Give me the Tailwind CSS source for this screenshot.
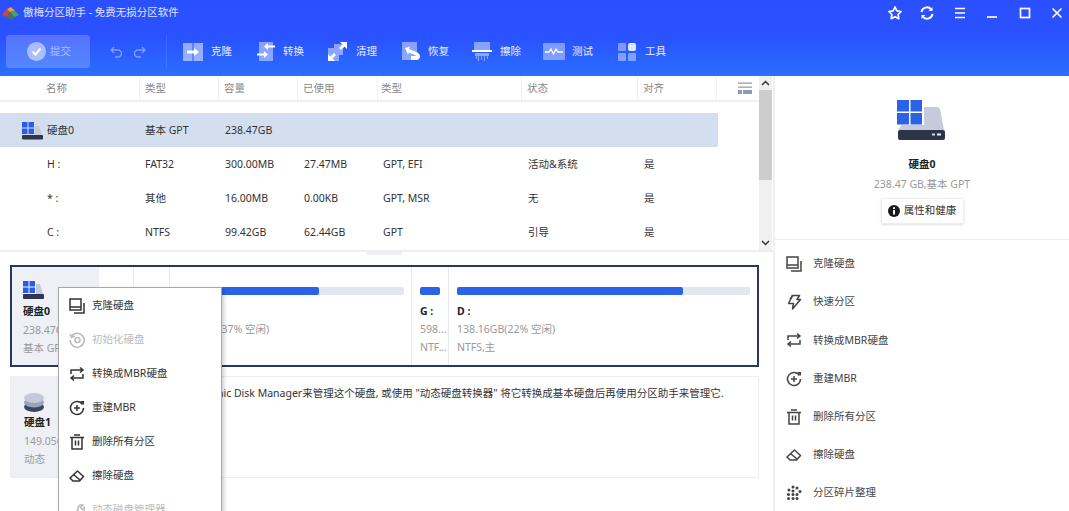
<!DOCTYPE html>
<html lang="zh">
<head>
<meta charset="utf-8">
<script src="https://cdn.jsdelivr.net/npm/@tailwindcss/browser@4"></script>
</head>
<body class="bg-white overflow-hidden">
<div class="relative w-[1069px] h-[511px] overflow-hidden flex flex-col text-[10.5px] text-[#333] font-['Noto_Sans','Noto_Sans_CJK_SC',sans-serif]">

<!-- header -->
<header class="h-[76px] shrink-0 flex flex-col bg-gradient-to-b from-[#2a4fff] via-[#2a52ff] to-[#2c6eff] text-white">
  <div class="h-[26px] flex items-center">
    <svg class="ml-[2px] w-[17px] h-[14px]" viewBox="0 0 17 14"><path d="M0 9 5 3l3 3-3 5z" fill="#d8423c"/><path d="M5 3l4-2 4 4-5 1z" fill="#e8a03a"/><path d="M8 6l5-1 4 4-5 2z" fill="#4aa45a"/><path d="M5 11l3-5 4 5-3 3z" fill="#3a7a55"/></svg>
    <span class="ml-[4px] text-white/85">傲梅分区助手 - 免费无损分区软件</span>
    <div class="ml-auto flex items-center gap-[16.4px] pr-[4px]">
      <svg class="w-[16px] h-[16px]" viewBox="0 0 16 16" fill="none" stroke="#fff" stroke-width="1.700" stroke-linejoin="round"><path d="M8 2l1.900 3.900 4.200.6-3 3 .7 4.200L8 11.700l-3.800 2 .7-4.200-3-3 4.200-.6z"/></svg>
      <svg class="w-[16px] h-[16px]" viewBox="0 0 16 16" fill="none" stroke="#fff" stroke-width="2"><path d="M2.500 7A5.500 5.500 0 0 1 12 4.200"/><path d="M13.500 9A5.500 5.500 0 0 1 4 11.800"/><path d="M13.500 2v4h-4z" fill="#fff" stroke="none"/><path d="M2.500 14v-4h4z" fill="#fff" stroke="none"/></svg>
      <svg class="w-[16px] h-[16px]" viewBox="0 0 16 16" stroke="#fff" stroke-width="1.700"><path d="M3 3.500h10M3 8h10M3 12.500h10"/></svg>
      <svg class="w-[16px] h-[16px]" viewBox="0 0 16 16" stroke="#fff" stroke-width="1.700"><path d="M3 12h10"/></svg>
      <svg class="w-[16px] h-[16px]" viewBox="0 0 16 16" fill="none" stroke="#fff" stroke-width="1.700"><rect x="3.500" y="3.500" width="9" height="9"/></svg>
      <svg class="w-[16px] h-[16px]" viewBox="0 0 16 16" stroke="#fff" stroke-width="1.700"><path d="M3.500 3.500l9 9M12.500 3.500l-9 9"/></svg>
    </div>
  </div>
  <div class="flex items-center h-[33px] mt-[9px] pl-[6px]">
    <div class="w-[84px] h-[33px] rounded-[3px] bg-white/20 flex items-center pl-[21px] gap-[4px] text-white/50">
      <svg class="w-[19px] h-[19px]" viewBox="0 0 19 19"><circle cx="9.500" cy="9.500" r="9.500" fill="#fff" fill-opacity=".5"/><path d="M5.500 9.500l3 3 5-6" fill="none" stroke="#fff" stroke-width="2"/></svg>
      <span>提交</span>
    </div>
    <svg class="ml-[20px] w-[14px] h-[12px]" viewBox="0 0 14 12" fill="none" stroke="#fff" stroke-opacity=".4" stroke-width="1.400"><path d="M4 1 1 4l3 3M1 4h7a3.500 3.500 0 0 1 0 7H5"/></svg>
    <svg class="ml-[8px] w-[14px] h-[12px]" viewBox="0 0 14 12" fill="none" stroke="#fff" stroke-opacity=".4" stroke-width="1.400"><path d="M10 1l3 3-3 3M13 4H6a3.500 3.500 0 0 0 0 7h3"/></svg>
    <div class="ml-[20px] w-px h-[33px] bg-white/10"></div>

    <svg class="ml-[16px] w-[20px] h-[18px]" viewBox="0 0 20 18"><rect width="9.500" height="18" fill="#fff" fill-opacity=".5"/><rect x="10.500" width="9.500" height="18" fill="#fff" fill-opacity=".5"/><path d="M4 7.500h7V5l5 4-5 4v-2.500H4z" fill="#fff"/></svg>
    <span class="ml-[8px] w-[22px] text-white/90">克隆</span>

    <svg class="ml-[24px] w-[18px] h-[19px]" viewBox="0 0 18 19"><rect x="2" y="0" width="14" height="19" fill="#fff" fill-opacity=".45"/><path d="M18 3.500h-7V1L7 4.500 11 8V5.500h7zM0 11.500h7V9l4 3.500L7 16v-2.500H0z" fill="#fff"/></svg>
    <span class="ml-[8px] w-[22px] text-white/90">转换</span>

    <svg class="ml-[23px] w-[19px] h-[19px]" viewBox="0 0 19 19"><path d="M0 6h6V2h9v11h-4v6H0z" fill="#fff" fill-opacity=".45"/><path d="M12 0h7v7l-2.500-2.500L13 8l-2-2 3.500-3.500zM0 12l2.500 2.500L6 11l2 2-3.500 3.500L7 19H0z" fill="#fff"/></svg>
    <span class="ml-[9px] w-[22px] text-white/90">清理</span>

    <svg class="ml-[24px] w-[19px] h-[19px]" viewBox="0 0 19 19"><rect width="15" height="18" fill="#fff" fill-opacity=".45"/><path d="M3 6l5-1.500-1 2.500 6 2.500c3 1 5 2.500 5 5 0 2.500-2 3.500-4 3.500H9v-4h5c-1-1.500-3-2-5-2.500l-2-1-1 2z" fill="#fff"/></svg>
    <span class="ml-[7px] w-[22px] text-white/90">恢复</span>

    <svg class="ml-[22px] w-[20px] h-[19px]" viewBox="0 0 20 19"><rect x="2" width="16" height="8" fill="#fff" fill-opacity=".45"/><rect y="8" width="20" height="2" fill="#fff"/><path d="M3 11h14v3h-1v3h-1v-3h-2v5h-1v-5h-2v4H9v-4H7v5H6v-5H5v3H4v-3H3z" fill="#fff" fill-opacity=".45"/></svg>
    <span class="ml-[8px] w-[22px] text-white/90">擦除</span>

    <svg class="ml-[21px] w-[22px] h-[17px]" viewBox="0 0 22 17"><rect width="22" height="17" rx="1" fill="#fff" fill-opacity=".4"/><path d="M2 9h4l2-3 2.500 5L13 6l2 3h5" fill="none" stroke="#fff" stroke-width="1.300"/></svg>
    <span class="ml-[7px] w-[22px] text-white/90">测试</span>

    <div class="ml-[24px] w-[18px] h-[18px] grid grid-cols-2 gap-[2px]">
      <div class="rounded-[1px] bg-white/40"></div><div class="rounded-[2px] bg-white/85"></div>
      <div class="rounded-[1px] bg-white/40"></div><div class="rounded-[1px] bg-white/40"></div>
    </div>
    <span class="ml-[9px] text-white/90">工具</span>
  </div>
</header>

<div class="flex-1 flex min-h-0">
  <!-- left -->
  <main class="w-[773px] shrink-0 flex flex-col">
    <div class="h-[176px] shrink-0 flex border-b-2 border-[#eceef2]">
      <div class="w-[759px] shrink-0">
        <div class="h-[26px] grid grid-cols-[46px_94px_79px_79px_80px_144px_116px_79px_auto] items-center text-[#888] border-b-2 border-[#eff0f3]">
          <span></span>
          <span class="border-r border-[#f0f0f0] leading-[23px]">名称</span>
          <span class="border-r border-[#f0f0f0] leading-[23px] pl-[5px]">类型</span>
          <span class="border-r border-[#f0f0f0] leading-[23px] pl-[5px]">容量</span>
          <span class="border-r border-[#f0f0f0] leading-[23px] pl-[5px]">已使用</span>
          <span class="border-r border-[#f0f0f0] leading-[23px] pl-[3px]">类型</span>
          <span class="border-r border-[#f0f0f0] leading-[23px] pl-[5px]">状态</span>
          <span class="border-r border-[#f0f0f0] leading-[23px] pl-[5px]">对齐</span>
          <svg class="ml-[21px] w-[14px] h-[12px]" viewBox="0 0 14 12"><path d="M0 .5h14v1.300H0zM0 4.500h14v1.300H0z" fill="#8a9bb8"/><path d="M0 8h4v4H0zM5 8h9v4H5z" fill="#8a9bb8"/></svg>
        </div>
        <div class="mt-[11px] w-[718px] h-[34px] pt-[2px] grid grid-cols-[47px_98px_80px_79px_79px_145px_116px_1fr] items-center bg-[#d3dfef]">
          <span class="pl-[22px]"><svg class="w-[21px] h-[18px]" viewBox="0 0 21 18"><path d="M0 0h5.500v5.500H0zM6.500 0H12v5.500H6.500zM0 6.500h5.500V12H0zM6.500 6.500H12V12H6.500z" fill="#2b5ce6"/><path d="M13 4h4l3 9h-7z" fill="#c4cada"/><rect y="13" width="21" height="4.500" rx="1" fill="#2f3650"/></svg></span>
          <span>硬盘0</span><span>基本 GPT</span><span>238.47GB</span>
        </div>
        <div class="w-[718px] h-[34px] pt-[2px] grid grid-cols-[47px_98px_80px_79px_79px_145px_116px_1fr] items-center">
          <span></span><span>H :</span><span>FAT32</span><span>300.00MB</span><span>27.47MB</span><span>GPT, EFI</span><span>活动&amp;系统</span><span>是</span>
        </div>
        <div class="w-[718px] h-[34px] pt-[2px] grid grid-cols-[47px_98px_80px_79px_79px_145px_116px_1fr] items-center">
          <span></span><span>* :</span><span>其他</span><span>16.00MB</span><span>0.00KB</span><span>GPT, MSR</span><span>无</span><span>是</span>
        </div>
        <div class="w-[718px] h-[34px] pt-[2px] grid grid-cols-[47px_98px_80px_79px_79px_145px_116px_1fr] items-center">
          <span></span><span>C :</span><span>NTFS</span><span>99.42GB</span><span>62.44GB</span><span>GPT</span><span>引导</span><span>是</span>
        </div>
      </div>
      <div class="w-[13px] shrink-0 flex flex-col bg-[#f0f0f0]">
        <div class="h-[14px] flex items-center justify-center"><svg class="w-[9px] h-[6px]" viewBox="0 0 9 6" fill="none" stroke="#333" stroke-width="1.500"><path d="M1 5l3.500-3.500L8 5"/></svg></div>
        <div class="h-[90px] bg-[#cdcdcd]"></div>
        <div class="flex-1"></div>
        <div class="h-[14px] flex items-center justify-center"><svg class="w-[9px] h-[6px]" viewBox="0 0 9 6" fill="none" stroke="#333" stroke-width="1.500"><path d="M1 1l3.500 3.500L8 1"/></svg></div>
      </div>
    </div>

    <!-- disks -->
    <div class="pl-[10px] w-[759px] flex flex-col text-[#999]">
      <div class="ml-[357px] w-[35px] h-[3px] bg-[#eef0f4]"></div>
      <div class="mt-[10px] h-[102px] border-2 border-[#27375f] flex">
        <div class="w-[87px] bg-[#eef0f6] pl-[11px] pt-[14px] flex flex-col">
          <svg class="w-[22px] h-[19px]" viewBox="0 0 22 19"><path d="M0 0h5.500v5.500H0zM6.500 0H12v5.500H6.500zM0 6.500h5.500V12H0zM6.500 6.500H12V12H6.500z" fill="#2b5ce6"/><path d="M13 3h4l3 10h-7z" fill="#c4cada"/><rect y="13" width="21" height="5" rx="1" fill="#2f3650"/></svg>
          <span class="mt-[3px] font-bold text-[#222] leading-[17px]">硬盘0</span>
          <span class="leading-[18px] mt-[1px]">238.47GB</span>
          <span class="leading-[18px]">基本 GPT</span>
        </div>
        <div class="w-[35px] border-r border-[#eaeaea]"></div>
        <div class="w-[36px] border-r border-[#eaeaea]"></div>
        <div class="w-[242px] border-r border-[#eaeaea] px-[7px] pt-[20px] flex flex-col">
          <div class="h-[8px] bg-[#e3e8f0] rounded-[2px]"><div class="h-full w-[62.7%] bg-[#2b62e8] rounded-[2px]"></div></div>
          <span class="mt-[7px] h-[18px] text-[#222] font-bold leading-[18px]">C :</span>
          <span class="leading-[18px] whitespace-nowrap">61.98GB(37% 空闲)</span>
          <span class="leading-[18px]">NTFS,主</span>
        </div>
        <div class="w-[37px] border-r border-[#eaeaea] px-[8px] pt-[20px] flex flex-col">
          <div class="h-[8px] bg-[#2b62e8] rounded-[2px]"></div>
          <span class="mt-[7px] h-[18px] text-[#222] font-bold leading-[18px]">G :</span>
          <span class="leading-[18px] whitespace-nowrap">598...</span>
          <span class="leading-[18px] whitespace-nowrap">NTF...</span>
        </div>
        <div class="flex-1 pl-[8px] pr-[7px] pt-[20px] flex flex-col">
          <div class="h-[8px] bg-[#e3e8f0] rounded-[2px]"><div class="h-full w-[77%] bg-[#2b62e8] rounded-[2px]"></div></div>
          <span class="mt-[7px] h-[18px] text-[#222] font-bold leading-[18px]">D :</span>
          <span class="leading-[18px]">138.16GB(22% 空闲)</span>
          <span class="leading-[18px]">NTFS,主</span>
        </div>
      </div>
      <div class="mt-[9px] h-[102px] border border-[#eeeeee] flex">
        <div class="w-[88px] bg-[#eef0f6] pl-[13px] pt-[16px] flex flex-col">
          <svg class="w-[20px] h-[20px]" viewBox="0 0 20 20"><ellipse cx="10" cy="14" rx="10" ry="5" fill="#3c4560"/><ellipse cx="10" cy="9.500" rx="10" ry="5" fill="#9aa3bb"/><ellipse cx="10" cy="5" rx="10" ry="5" fill="#c3c9d8"/></svg>
          <span class="mt-[1px] font-bold text-[#222] leading-[17px]">硬盘1</span>
          <span class="leading-[18px] mt-[1px]">149.05GB</span>
          <span class="leading-[18px]">动态</span>
        </div>
        <p class="pl-[55px] pt-[9px] text-[#333] whitespace-nowrap">请使用 Dynamic Disk Manager来管理这个硬盘, 或使用 "动态硬盘转换器" 将它转换成基本硬盘后再使用分区助手来管理它.</p>
      </div>
    </div>
  </main>

  <!-- right -->
  <aside class="flex-1 border-l-2 border-[#f0f0f0] flex flex-col">
    <div class="h-[164px] shrink-0 border-b border-[#eeeeee] flex flex-col items-center">
      <svg class="mt-[24px] w-[50px] h-[41px] -ml-[2px]" viewBox="0 0 50 41"><path d="M22 7h19a3 3 0 0 1 3 2l4 21H2l6-8h14z" fill="#c6cbdb"/><rect x="2" y="30" width="47" height="10" rx="2" fill="#2e3448"/><rect x="36" y="33.500" width="3" height="2" fill="#cfd6e6"/><rect x="41" y="33.500" width="4" height="2" fill="#eef"/><rect x="0" y="0" width="28" height="25" fill="#fff"/><path d="M1 0h12v11.500H1zM14.500 0H26v11.500H14.500zM1 13h12v11.500H1zM14.500 13H26v11.500H14.500z" fill="#2b62e8"/></svg>
      <span class="mt-[15px] font-bold text-[#222] leading-[16px]">硬盘0</span>
      <span class="mt-[4px] text-[#999] leading-[16px]">238.47 GB,基本 GPT</span>
      <div class="mt-[6px] h-[26px] w-[83px] border border-[#eee] rounded-[2px] shadow-sm flex items-center justify-center gap-[4px] text-[#333]">
        <svg class="w-[12px] h-[12px]" viewBox="0 0 12 12"><circle cx="6" cy="6" r="6" fill="#1a1a1a"/><path d="M5 5h2v4.500H5zM5 2.300h2v1.700H5z" fill="#fff"/></svg>
        <span>属性和健康</span>
      </div>
    </div>
    <div class="pl-[11px] pt-[5px] flex flex-col text-[#444]">
      <div class="h-[38.2px] flex items-center gap-[11px]">
        <svg class="w-[16px] h-[16px]" viewBox="0 0 16 16" fill="none" stroke="#444" stroke-width="1.500"><rect x="1" y="1" width="11" height="11"/><path d="M1 9h11M15 5v10H5"/></svg><span>克隆硬盘</span>
      </div>
      <div class="h-[38.2px] flex items-center gap-[11px]">
        <svg class="w-[16px] h-[16px]" viewBox="0 0 16 16" fill="none" stroke="#444" stroke-width="1.500" stroke-linejoin="round"><path d="M6.500 1.500h7L11 5.500h3.500L6.500 15l1-5.500h-5z"/><path d="M6.500 1.500 4 5.500"/></svg><span>快速分区</span>
      </div>
      <div class="h-[38.2px] flex items-center gap-[11px]">
        <svg class="w-[16px] h-[16px]" viewBox="0 0 16 16" fill="none" stroke="#444" stroke-width="1.500"><path d="M2 8V4h12M11 1.500 14 4l-3 2.500M14 8v4H2M5 9.500 2 12l3 2.500"/></svg><span>转换成MBR硬盘</span>
      </div>
      <div class="h-[38.2px] flex items-center gap-[11px]">
        <svg class="w-[16px] h-[16px]" viewBox="0 0 16 16" fill="none" stroke="#444" stroke-width="1.500"><path d="M13.500 4.500A6.500 6.500 0 1 0 14.500 8M8 5v6M5 8h6"/><path d="M11 1h4v4z" fill="#444" stroke="none"/></svg><span>重建MBR</span>
      </div>
      <div class="h-[38.2px] flex items-center gap-[11px]">
        <svg class="w-[16px] h-[16px]" viewBox="0 0 16 16" fill="none" stroke="#444" stroke-width="1.500"><path d="M1 3.500h14M5 1h6M3 3.500V15h10V3.500M6.500 6.500v5M9.500 6.500v5"/></svg><span>删除所有分区</span>
      </div>
      <div class="h-[38.2px] flex items-center gap-[11px]">
        <svg class="w-[16px] h-[16px]" viewBox="0 0 16 16" fill="none" stroke="#444" stroke-width="1.500" stroke-linejoin="round"><path d="M1 10 8.500 3l6 5.500-4 4.500H4zM5 7l6 5"/></svg><span>擦除硬盘</span>
      </div>
      <div class="h-[38.2px] flex items-center gap-[11px]">
        <svg class="w-[16px] h-[16px]" viewBox="0 0 16 16" fill="#444"><circle cx="7" cy="2" r="1.500"/><circle cx="11" cy="3" r="1.500"/><circle cx="14" cy="6.500" r="1.500"/><circle cx="3" cy="5" r="1.500"/><circle cx="7" cy="6" r="1.500"/><circle cx="2.500" cy="9.500" r="1.500"/><circle cx="7" cy="9.500" r="1.500"/><circle cx="11" cy="9.500" r="1.500"/><circle cx="2.500" cy="13.500" r="1.500"/><circle cx="7" cy="13.500" r="1.500"/><circle cx="11" cy="13.500" r="1.500"/></svg><span>分区碎片整理</span>
      </div>
    </div>
  </aside>
</div>

<!-- context menu -->
<div class="absolute left-[58px] top-[287px] w-[164px] h-[240px] pt-[1px] bg-white border border-[#a8a8a8] shadow-[2px_2px_4px_rgba(0,0,0,0.2)] flex flex-col pl-[10px] text-[#333]">
  <div class="h-[34px] shrink-0 flex items-center gap-[7px]"><svg class="w-[16px] h-[16px]" viewBox="0 0 16 16" fill="none" stroke="#333" stroke-width="1.500"><rect x="1" y="1" width="11" height="11"/><path d="M1 9h11M15 5v10H5"/></svg><span>克隆硬盘</span></div>
  <div class="h-[34px] shrink-0 flex items-center gap-[7px] text-[#bbb]"><svg class="w-[16px] h-[16px]" viewBox="0 0 16 16" fill="none" stroke="#bbb" stroke-width="1.500"><path d="M2 5a7 7 0 1 1-.8 3M1 2l1.500 3.500L6 4"/><circle cx="8.500" cy="8" r="2.500"/></svg><span>初始化硬盘</span></div>
  <div class="h-[34px] shrink-0 flex items-center gap-[7px]"><svg class="w-[16px] h-[16px]" viewBox="0 0 16 16" fill="none" stroke="#333" stroke-width="1.500"><path d="M2 8V4h12M11 1.500 14 4l-3 2.500M14 8v4H2M5 9.500 2 12l3 2.500"/></svg><span>转换成MBR硬盘</span></div>
  <div class="h-[34px] shrink-0 flex items-center gap-[7px]"><svg class="w-[16px] h-[16px]" viewBox="0 0 16 16" fill="none" stroke="#333" stroke-width="1.500"><path d="M13.500 4.500A6.500 6.500 0 1 0 14.500 8M8 5v6M5 8h6"/><path d="M11 1h4v4z" fill="#333" stroke="none"/></svg><span>重建MBR</span></div>
  <div class="h-[34px] shrink-0 flex items-center gap-[7px]"><svg class="w-[16px] h-[16px]" viewBox="0 0 16 16" fill="none" stroke="#333" stroke-width="1.500"><path d="M1 3.500h14M5 1h6M3 3.500V15h10V3.500M6.500 6.500v5M9.500 6.500v5"/></svg><span>删除所有分区</span></div>
  <div class="h-[34px] shrink-0 flex items-center gap-[7px]"><svg class="w-[16px] h-[16px]" viewBox="0 0 16 16" fill="none" stroke="#333" stroke-width="1.500" stroke-linejoin="round"><path d="M1 10 8.500 3l6 5.500-4 4.500H4zM5 7l6 5"/></svg><span>擦除硬盘</span></div>
  <div class="h-[34px] shrink-0 flex items-center gap-[7px] text-[#bbb]"><svg class="w-[16px] h-[16px]" viewBox="0 0 16 16" fill="none" stroke="#bbb" stroke-width="1.500"><path d="M3 14l6-6a4 4 0 0 1 5-5l-2.500 2.500 2 2L16 5a4 4 0 0 1-5 5l-6 6z"/></svg><span>动态磁盘管理器</span></div>
</div>
</div>
</body>
</html>
